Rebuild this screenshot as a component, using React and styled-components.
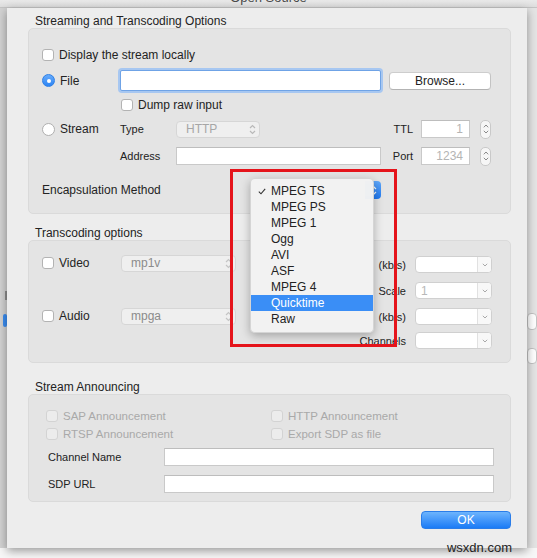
import styled, { createGlobalStyle } from "styled-components";

const GlobalStyle = createGlobalStyle`
  html, body { margin: 0; padding: 0; }
  body {
    width: 537px;
    height: 558px;
    overflow: hidden;
    background: #f4f4f4;
    font-family: "Liberation Sans", Arial, Helvetica, sans-serif;
    font-size: 12px;
    color: #232323;
  }
  * { box-sizing: border-box; }
`;

/* window chrome */
const Page = styled.div`
  position: relative;
  display: flex;
  flex-direction: column;
  width: 537px;
  height: 558px;
`;

const TitleStrip = styled.div`
  height: 8px;
  overflow: hidden;
  display: flex;
  justify-content: center;
  background: linear-gradient(#e9e9e9, #dedede);
  border-bottom: 1px solid #c4c4c4;
`;

const TitleText = styled.div`
  font-size: 13px;
  line-height: 14px;
  margin-top: -9px;
  color: #4b4b4b;
`;

const Body = styled.div`
  display: flex;
  height: 540px;
`;

const Gutter = styled.div`
  width: ${(p) => p.w}px;
  display: flex;
  flex-direction: column;
  align-items: ${(p) => (p.side === "left" ? "flex-end" : "flex-start")};
  background: ${(p) => (p.side === "left" ? "#d2d2d2" : "#e4e4e4")};
`;

const ParentBit = styled.div`
  width: ${(p) => p.w}px;
  height: ${(p) => p.h}px;
  margin-top: ${(p) => p.mt}px;
  background: ${(p) => p.bg};
  border: ${(p) => (p.border ? "1px solid #c3c3c3" : "none")};
  border-radius: ${(p) => p.r || 0}px;
`;

const Sheet = styled.div`
  position: relative;
  z-index: 1;
  flex: 1;
  display: flex;
  flex-direction: column;
  padding: 6px 16px 0 21px;
  background: #ededed;
  box-shadow: 0 3px 9px rgba(0, 0, 0, 0.38);
`;

const Footer = styled.div`
  flex: 1;
  background: #f7f7f7;
`;

const Watermark = styled.div`
  position: absolute;
  right: 25px;
  bottom: 3px;
  z-index: 2;
  font-size: 13px;
  color: #1e1e1e;
`;

/* groups */
const GroupLabel = styled.div`
  font-size: 12px;
  line-height: 14px;
  height: 14px;
  padding-left: 7px;
  margin-top: ${(p) => p.mt || 0}px;
`;

const Group = styled.div`
  display: flex;
  flex-direction: ${(p) => p.dir || "column"};
  justify-content: space-between;
  background: #e4e4e4;
  border: 1px solid #dadada;
  border-radius: 5px;
  padding: ${(p) => p.pad};
`;

const Row = styled.div`
  display: flex;
  align-items: center;
  height: ${(p) => p.h}px;
  margin-top: ${(p) => p.mt || 0}px;
  margin-left: ${(p) => p.ml || 0}px;
`;

const Column = styled.div`
  display: flex;
  flex-direction: column;
  align-items: ${(p) => p.align || "stretch"};
  margin-top: ${(p) => p.mt || 0}px;
`;

const Spacer = styled.div`
  flex: 1;
`;

/* controls */
const Option = styled.div`
  display: flex;
  align-items: center;
  gap: 5px;
  width: ${(p) => (p.w ? `${p.w}px` : "auto")};
  color: ${(p) => (p.disabled ? "#a9a9a9" : "#232323")};
  font-size: ${(p) => (p.disabled ? 11.5 : 12)}px;
`;

const CheckBox = styled.span`
  display: inline-block;
  width: 12px;
  height: 12px;
  border-radius: 3px;
  background: ${(p) => (p.disabled ? "#ececec" : "#ffffff")};
  border: 1px solid ${(p) => (p.disabled ? "#d3d3d3" : "#b3b3b3")};
`;

const Radio = styled.span`
  position: relative;
  display: inline-block;
  width: 13px;
  height: 13px;
  border-radius: 50%;
  background: ${(p) => (p.checked ? "linear-gradient(#67abfb, #2c84f4)" : "#ffffff")};
  border: 1px solid ${(p) => (p.checked ? "#2d7fe6" : "#afafaf")};

  &::after {
    content: "";
    display: ${(p) => (p.checked ? "block" : "none")};
    position: absolute;
    left: 3.5px;
    top: 3.5px;
    width: 4px;
    height: 4px;
    border-radius: 50%;
    background: #ffffff;
  }
`;

const FieldLabel = styled.div`
  width: ${(p) => (p.w ? `${p.w}px` : "auto")};
  font-size: 11px;
  text-align: ${(p) => p.align || "left"};
  margin-right: ${(p) => p.mr || 0}px;
  color: #222;
`;

const TextField = styled.div`
  display: flex;
  align-items: center;
  justify-content: flex-end;
  width: ${(p) => (p.w ? `${p.w}px` : "auto")};
  flex: ${(p) => (p.w ? "none" : 1)};
  height: ${(p) => p.h || 18}px;
  padding: 0 6px;
  background: #ffffff;
  border: 1px solid ${(p) => (p.focus ? "#6fa3e6" : "#c9c9c9")};
  border-top-color: ${(p) => (p.focus ? "#6fa3e6" : "#bdbdbd")};
  box-shadow: ${(p) => (p.focus ? "0 0 0 2px #a7c7f1" : "none")};
  border-radius: ${(p) => (p.focus ? 2 : 0)}px;
  color: #b4b4b4;
  font-size: 12px;
`;

const PushButton = styled.div`
  display: flex;
  align-items: center;
  justify-content: center;
  width: ${(p) => p.w}px;
  height: 18px;
  background: #ffffff;
  border: 1px solid #c3c3c3;
  border-top-color: #cdcdcd;
  border-bottom-color: #b3b3b3;
  border-radius: 4px;
  font-size: 12px;
`;

const DefaultButton = styled(PushButton)`
  background: linear-gradient(#6db4fd, #1b7bf6);
  border: 1px solid #2a7de9;
  color: #ffffff;
`;

const PopUp = styled.div`
  position: relative;
  display: flex;
  align-items: center;
  justify-content: space-between;
  width: ${(p) => p.w}px;
  height: ${(p) => p.h || 17}px;
  padding: 0 3px 0 ${(p) => p.pl || 9}px;
  background: #efefef;
  border: 1px solid #d6d6d6;
  border-radius: 4px;
  color: ${(p) => p.color || "#a6a6a6"};
  font-size: 12px;
`;

const BlueCap = styled.div`
  position: absolute;
  right: -1px;
  top: -1px;
  bottom: -1px;
  width: 16px;
  display: flex;
  align-items: center;
  justify-content: center;
  background: linear-gradient(#5fa8fb, #1f78f0);
  border-radius: 0 4px 4px 0;
`;

const Combo = styled.div`
  display: flex;
  width: 77px;
  height: 17px;
  background: #ffffff;
  border: 1px solid #d0d0d0;
  border-radius: 4px;
  overflow: hidden;
`;

const ComboField = styled.div`
  flex: 1;
  display: flex;
  align-items: center;
  padding-left: 5px;
  color: #b8b8b8;
  font-size: 12px;
`;

const ComboButton = styled.div`
  width: 14px;
  display: flex;
  align-items: center;
  justify-content: center;
  border-left: 1px solid #e1e1e1;
  background: #f8f8f8;
`;

const Stepper = styled.div`
  display: flex;
  flex-direction: column;
  align-items: center;
  justify-content: space-around;
  width: 11px;
  height: 19px;
  margin-left: 10px;
  padding: 2px 0;
  background: #f6f6f6;
  border: 1px solid #c9c9c9;
  border-radius: 5px;
`;

/* dropdown menu + annotation */
const EncapsWrap = styled.div`
  position: relative;
`;

const Menu = styled.div`
  position: absolute;
  left: 0;
  top: -3px;
  z-index: 3;
  width: 124px;
  padding: 4px 0 5px;
  background: rgba(242, 242, 242, 0.98);
  border: 1px solid rgba(0, 0, 0, 0.12);
  border-radius: 5px;
  box-shadow: 0 3px 10px rgba(0, 0, 0, 0.28);
`;

const MenuItem = styled.div`
  position: relative;
  height: 16px;
  line-height: 16px;
  padding-left: 20px;
  font-size: 12px;
  background: ${(p) => (p.active ? "#3a8ef6" : "transparent")};
  color: ${(p) => (p.active ? "#ffffff" : "#222222")};
`;

const Check = styled.svg`
  position: absolute;
  left: 7px;
  top: 5px;
`;

const Annotation = styled.div`
  position: absolute;
  left: -20px;
  top: -12px;
  z-index: 4;
  width: 167px;
  height: 178px;
  border: 3px solid #e5141b;
  pointer-events: none;
`;

/* icons */
const UpDown = ({ color = "#b9b9b9" }) => (
  <svg width="7" height="11" viewBox="0 0 7 11">
    <path d="M1 4 L3.5 1.5 L6 4 M1 7 L3.5 9.5 L6 7" fill="none" stroke={color} strokeWidth="1.2" />
  </svg>
);

const ChevronUp = () => (
  <svg width="6" height="4" viewBox="0 0 6 4">
    <path d="M0.8 3.3 L3 1 L5.2 3.3" fill="none" stroke="#8a8a8a" strokeWidth="1" />
  </svg>
);

const ChevronDown = ({ color = "#8a8a8a" }) => (
  <svg width="6" height="4" viewBox="0 0 6 4">
    <path d="M0.8 0.8 L3 3 L5.2 0.8" fill="none" stroke={color} strokeWidth="1" />
  </svg>
);

const encapsulations = [
  "MPEG TS",
  "MPEG PS",
  "MPEG 1",
  "Ogg",
  "AVI",
  "ASF",
  "MPEG 4",
  "Quicktime",
  "Raw",
];

function TranscodeCombo({ label, value, mt }) {
  return (
    <Row h={17} mt={mt}>
      <FieldLabel align="right" mr={9}>
        {label}
      </FieldLabel>
      <Combo>
        <ComboField>{value}</ComboField>
        <ComboButton>
          <ChevronDown color="#a9a9a9" />
        </ComboButton>
      </Combo>
    </Row>
  );
}

export default function App() {
  return (
    <>
      <GlobalStyle />
      <Page>
        <TitleStrip>
          <TitleText>Open Source</TitleText>
        </TitleStrip>

        <Body>
          <Gutter w={7} side="left">
            <ParentBit w={2} h={9} mt={283} bg="#8e8e8e" />
            <ParentBit w={4} h={13} mt={14} bg="#3b8ef2" r={2} />
          </Gutter>

          <Sheet>
            {/* Streaming */}
            <GroupLabel>Streaming and Transcoding Options</GroupLabel>
            <Group pad="19px 19px 14px 13px">
              <Row h={14}>
                <Option>
                  <CheckBox />
                  Display the stream locally
                </Option>
              </Row>

              <Row h={21} mt={8}>
                <Option w={78}>
                  <Radio checked />
                  File
                </Option>
                <TextField w={261} h={21} focus />
                <Spacer />
                <PushButton w={102}>Browse...</PushButton>
              </Row>

              <Row h={14} mt={7} ml={79}>
                <Option>
                  <CheckBox />
                  Dump raw input
                </Option>
              </Row>

              <Row h={20} mt={7}>
                <Option w={78}>
                  <Radio />
                  Stream
                </Option>
                <FieldLabel w={56}>Type</FieldLabel>
                <PopUp w={84}>
                  HTTP
                  <UpDown />
                </PopUp>
                <Spacer />
                <FieldLabel mr={8}>TTL</FieldLabel>
                <TextField w={49} h={18}>1</TextField>
                <Stepper>
                  <ChevronUp />
                  <ChevronDown />
                </Stepper>
              </Row>

              <Row h={20} mt={7} ml={78}>
                <FieldLabel w={56}>Address</FieldLabel>
                <TextField w={205} h={18} />
                <Spacer />
                <FieldLabel mr={8}>Port</FieldLabel>
                <TextField w={49} h={18}>1234</TextField>
                <Stepper>
                  <ChevronUp />
                  <ChevronDown />
                </Stepper>
              </Row>

              <Row h={18} mt={15}>
                <Option w={208}>Encapsulation Method</Option>
                <EncapsWrap>
                  {/* the open menu hides the popup's own label */}
                  <PopUp w={131} h={18}>
                    <BlueCap>
                      <UpDown color="#ffffff" />
                    </BlueCap>
                  </PopUp>
                  <Menu>
                    {encapsulations.map((name, i) => (
                      <MenuItem key={name} active={name === "Quicktime"}>
                        {i === 0 && (
                          <Check width="8" height="7" viewBox="0 0 8 7">
                            <path d="M0.8 3.6 L3 5.8 L7.2 0.8" fill="none" stroke="#333" strokeWidth="1.1" />
                          </Check>
                        )}
                        {name}
                      </MenuItem>
                    ))}
                  </Menu>
                  <Annotation />
                </EncapsWrap>
              </Row>
            </Group>

            {/* Transcoding */}
            <GroupLabel mt={12}>Transcoding options</GroupLabel>
            <Group dir="row" pad="13px 18px 13px 13px">
              <Column>
                <Row h={18}>
                  <Option w={79}>
                    <CheckBox />
                    Video
                  </Option>
                  <PopUp w={115} color="#8b8b8b">
                    mp1v
                    <UpDown color="#c4c4c4" />
                  </PopUp>
                </Row>
                <Row h={18} mt={35}>
                  <Option w={79}>
                    <CheckBox />
                    Audio
                  </Option>
                  <PopUp w={115} color="#8b8b8b">
                    mpga
                    <UpDown color="#c4c4c4" />
                  </PopUp>
                </Row>
              </Column>
              <Column align="flex-end" mt={2}>
                <TranscodeCombo label="(kb/s)" />
                <TranscodeCombo label="Scale" value="1" mt={9} />
                <TranscodeCombo label="(kb/s)" mt={9} />
                <TranscodeCombo label="Channels" mt={7} />
              </Column>
            </Group>

            {/* Announcing */}
            <GroupLabel mt={17}>Stream Announcing</GroupLabel>
            <Group pad="14px 16px 8px 17px">
              <Row h={14}>
                <Option w={225} disabled>
                  <CheckBox disabled />
                  SAP Announcement
                </Option>
                <Option disabled>
                  <CheckBox disabled />
                  HTTP Announcement
                </Option>
              </Row>
              <Row h={14} mt={4}>
                <Option w={225} disabled>
                  <CheckBox disabled />
                  RTSP Announcement
                </Option>
                <Option disabled>
                  <CheckBox disabled />
                  Export SDP as file
                </Option>
              </Row>
              <Row h={18} mt={7} ml={2}>
                <FieldLabel w={116}>Channel Name</FieldLabel>
                <TextField />
              </Row>
              <Row h={18} mt={9} ml={2}>
                <FieldLabel w={116}>SDP URL</FieldLabel>
                <TextField />
              </Row>
            </Group>

            <Row h={18} mt={9}>
              <Spacer />
              <DefaultButton w={90}>OK</DefaultButton>
            </Row>
          </Sheet>

          <Gutter w={10} side="right">
            <ParentBit w={10} h={17} mt={305} bg="#ffffff" border r={4} />
            <ParentBit w={10} h={16} mt={18} bg="#ffffff" border r={4} />
          </Gutter>
        </Body>

        <Footer />
        <Watermark>wsxdn.com</Watermark>
      </Page>
    </>
  );
}
